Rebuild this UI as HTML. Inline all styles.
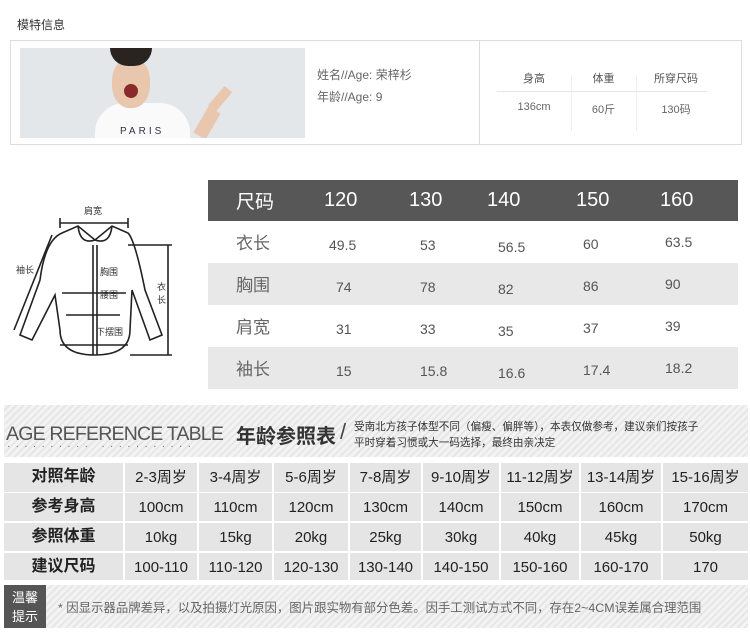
<!DOCTYPE html>
<html><head><meta charset="utf-8"><style>
*{margin:0;padding:0;box-sizing:border-box}
body{width:750px;height:638px;background:#fff;position:relative;overflow:hidden;font-family:"Liberation Sans","Noto Sans CJK SC",sans-serif;color:#444}
.a{position:absolute}
.stripe{background:repeating-linear-gradient(135deg,#f3f3f3 0,#f3f3f3 3px,#e6e6e6 3px,#e6e6e6 5px)}
.sc{position:absolute;font-size:17px;color:#666}
.ag{position:absolute;background:#e5e5e5;text-align:center;font-size:15px;color:#222;line-height:30px}
</style></head><body>
<div class="a" style="left:17px;top:16px;font-size:12px;color:#333">模特信息</div>
<div class="a" style="left:10px;top:40px;width:732px;height:105px;border:1px solid #ddd"></div>
<div class="a" style="left:479px;top:40px;width:1px;height:105px;background:#ddd"></div>
<div class="a" style="left:20px;top:48px;width:285px;height:90px;background:#e4e7ea;overflow:hidden">
 <div class="a" style="left:75px;top:55px;width:95px;height:45px;background:#fafafa;border-radius:30px 30px 0 0"></div>
 <div class="a" style="left:92px;top:10px;width:38px;height:50px;background:#e8c7ad;border-radius:45%"></div>
 <div class="a" style="left:90px;top:0px;width:42px;height:18px;background:#2a2420;border-radius:0 0 20px 20px"></div>
 <div class="a" style="left:104px;top:36px;width:14px;height:14px;background:#8a2a2a;border-radius:50%"></div>
 <div class="a" style="left:100px;top:78px;font-size:10px;color:#334;letter-spacing:3px">PARIS</div>
 <div class="a" style="left:180px;top:60px;width:14px;height:30px;background:#e8c7ad;transform:rotate(30deg)"></div>
 <div class="a" style="left:195px;top:38px;width:10px;height:26px;background:#e8c7ad;transform:rotate(40deg)"></div>
</div>
<div class="a" style="left:317px;top:66px;font-size:12px;color:#666">姓名//Age: 荣梓杉</div>
<div class="a" style="left:317px;top:88px;font-size:12px;color:#666">年龄//Age: 9</div>
<div class="a" style="left:497px;top:91px;width:210px;height:1px;background:#e5e5e5"></div>
<div class="a" style="left:571px;top:76px;width:1px;height:55px;background:#eee"></div>
<div class="a" style="left:636px;top:76px;width:1px;height:55px;background:#eee"></div>
<div class="a" style="left:497px;top:70px;width:74px;text-align:center;font-size:11px;color:#555">身高</div>
<div class="a" style="left:571px;top:70px;width:65px;text-align:center;font-size:11px;color:#555">体重</div>
<div class="a" style="left:636px;top:70px;width:80px;text-align:center;font-size:11px;color:#555">所穿尺码</div>
<div class="a" style="left:497px;top:101px;width:74px;text-align:center;font-size:11px;color:#666">136cm</div>
<div class="a" style="left:571px;top:101px;width:65px;text-align:center;font-size:11px;color:#666">60斤</div>
<div class="a" style="left:636px;top:101px;width:80px;text-align:center;font-size:11px;color:#666">130码</div>

<svg class="a" style="left:0;top:185px" width="200" height="185" viewBox="0 185 200 185" fill="none" stroke="#222" stroke-width="1.6">
<path d="M60 223 L128 223 M60 218 V228 M128 218 V228"/>
<path d="M62 233 Q45 240 40 280 L20 335 L32 340 L55 295 L60 330 Q60 355 95 355 Q130 355 130 330 L132 290 L150 340 L162 335 L145 290 Q135 240 128 233 L112 226 L95 240 L78 226 Z"/>
<path d="M78 226 Q80 245 95 240 Q110 245 112 226"/>
<path d="M93 245 V355 M97 245 V355"/>
<path d="M52 235 L14 330 M62 293 H126 M66 315 H120 M60 345 H128 M168 245 V355 M128 245 H172 M130 355 H172"/>
<text x="84" y="214" font-size="9" fill="#333" stroke="none">肩宽</text>
<text x="16" y="273" font-size="9" fill="#333" stroke="none">袖长</text>
<text x="100" y="275" font-size="9" fill="#333" stroke="none">胸围</text>
<text x="100" y="298" font-size="9" fill="#333" stroke="none">腰围</text>
<text x="96" y="335" font-size="9" fill="#333" stroke="none">下摆围</text>
<text x="157" y="290" font-size="9" fill="#333" stroke="none">衣</text>
<text x="157" y="303" font-size="9" fill="#333" stroke="none">长</text>
</svg>

<div class="a" style="left:208px;top:180px;width:530px;height:41px;background:#575757"></div>
<div class="a" style="left:208px;top:263px;width:530px;height:42px;background:#e8e8e8"></div>
<div class="a" style="left:208px;top:347px;width:530px;height:42px;background:#e8e8e8"></div>
<div class="sc" style="left:236px;top:187px;color:#fff;font-size:19px">尺码</div>
<div class="sc" style="left:324px;top:189px;color:#fff;font-size:20px">120</div>
<div class="sc" style="left:409px;top:189px;color:#fff;font-size:20px">130</div>
<div class="sc" style="left:487px;top:189px;color:#fff;font-size:20px">140</div>
<div class="sc" style="left:576px;top:189px;color:#fff;font-size:20px">150</div>
<div class="sc" style="left:660px;top:189px;color:#fff;font-size:20px">160</div>
<div class="sc" style="left:236px;top:229px">衣长</div>
<div class="sc" style="left:236px;top:271px">胸围</div>
<div class="sc" style="left:236px;top:313px">肩宽</div>
<div class="sc" style="left:236px;top:355px">袖长</div>
<div style="font-size:14px;color:#555">
<div class="a" style="left:329px;top:237px">49.5</div><div class="a" style="left:420px;top:237px">53</div><div class="a" style="left:498px;top:239px">56.5</div><div class="a" style="left:583px;top:236px">60</div><div class="a" style="left:665px;top:234px">63.5</div>
<div class="a" style="left:336px;top:279px">74</div><div class="a" style="left:420px;top:279px">78</div><div class="a" style="left:498px;top:281px">82</div><div class="a" style="left:583px;top:278px">86</div><div class="a" style="left:665px;top:276px">90</div>
<div class="a" style="left:336px;top:321px">31</div><div class="a" style="left:420px;top:321px">33</div><div class="a" style="left:498px;top:323px">35</div><div class="a" style="left:583px;top:320px">37</div><div class="a" style="left:665px;top:318px">39</div>
<div class="a" style="left:336px;top:363px">15</div><div class="a" style="left:420px;top:363px">15.8</div><div class="a" style="left:498px;top:365px">16.6</div><div class="a" style="left:583px;top:362px">17.4</div><div class="a" style="left:665px;top:360px">18.2</div>
</div>

<div class="a stripe" style="left:4px;top:405px;width:744px;height:52px"></div>
<div class="a" style="left:6px;top:423px;font-size:19.5px;color:#555;letter-spacing:-0.8px">AGE REFERENCE TABLE</div>
<div class="a" style="left:7px;top:441px;font-size:10px;color:#666;letter-spacing:5.3px">··········&nbsp;···········</div>
<div class="a" style="left:236px;top:420px;font-size:20px;font-weight:bold;color:#333">年龄参照表</div>
<div class="a" style="left:340px;top:419px;font-size:22px;color:#444">/</div>
<div class="a" style="left:354px;top:419px;font-size:10.6px;color:#333;line-height:16px">受南北方孩子体型不同（偏瘦、偏胖等），本表仅做参考，建议亲们按孩子<br>平时穿着习惯或大一码选择，最终由亲决定</div>

<div id="ag"></div>
<script>
var cols=[[4,123],[125,197],[199,272],[274,348],[350,421],[423,499],[501,579],[581,661],[663,748]];
var rows=[[463,29],[493,28],[523,28],[553,27]];
var d=[["对照年龄","2-3周岁","3-4周岁","5-6周岁","7-8周岁","9-10周岁","11-12周岁","13-14周岁","15-16周岁"],
["参考身高","100cm","110cm","120cm","130cm","140cm","150cm","160cm","170cm"],
["参照体重","10kg","15kg","20kg","25kg","30kg","40kg","45kg","50kg"],
["建议尺码","100-110","110-120","120-130","130-140","140-150","150-160","160-170","170"]];
var h="";
for(var r=0;r<4;r++)for(var c=0;c<9;c++){h+='<div class="ag" style="left:'+cols[c][0]+'px;top:'+rows[r][0]+'px;width:'+(cols[c][1]-cols[c][0])+'px;height:'+rows[r][1]+'px;'+(c==0?'font-weight:bold;font-size:16px;line-height:28px;':'')+'">'+d[r][c]+'</div>';}
document.getElementById("ag").outerHTML=h;
</script>

<div class="a stripe" style="left:4px;top:585px;width:744px;height:43px"></div>
<div class="a" style="left:4px;top:585px;width:42px;height:43px;background:#555;color:#fff;font-size:13px;line-height:19px;text-align:center;padding-top:3px">温馨<br>提示</div>
<div class="a" style="left:58px;top:598px;font-size:12.4px;color:#666;white-space:nowrap">* 因显示器品牌差异，以及拍摄灯光原因，图片跟实物有部分色差。因手工测试方式不同，存在2~4CM误差属合理范围</div>
</body></html>
